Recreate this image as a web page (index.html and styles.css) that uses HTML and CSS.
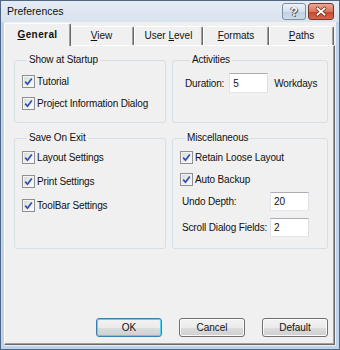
FILE: index.html
```html
<!DOCTYPE html>
<html lang="en">
<head>
  <meta charset="UTF-8" />
  <title>Preferences</title>
  <link rel="stylesheet" href="styles.css">
</head>
<body>
  <div class="window">
    <div class="titlebar">
      <span class="title">Preferences</span>
      <div class="caption-buttons">
        <span class="cap-btn help">?</span>
        <span class="cap-btn close">
          <svg width="26" height="17" viewBox="0 0 26 17">
            <path d="M9 5 L17 12 M17 5 L9 12" stroke="#6b2114" stroke-width="3.6" stroke-linecap="round" fill="none"/>
            <path d="M9 5 L17 12 M17 5 L9 12" stroke="#ffffff" stroke-width="2" stroke-linecap="round" fill="none"/>
          </svg>
        </span>
      </div>
    </div>

    <div class="client">
      <div class="tabs">
        <div class="tab active tab-general"><u>G</u>eneral</div>
        <div class="tab tab-view"><u>V</u>iew</div>
        <div class="tab tab-level">User <u>L</u>evel</div>
        <div class="tab tab-formats"><u>F</u>ormats</div>
        <div class="tab tab-paths"><u>P</u>aths</div>
      </div>

      <div class="panel">
        <div class="groups">
          <fieldset class="group startup">
            <legend>Show at Startup</legend>
            <div class="check-row"><span class="check"><svg viewBox="0 0 11 11"><path d="M2.2 5.6 L4.5 8.2 L8.8 2.4"/></svg></span>Tutorial</div>
            <div class="check-row"><span class="check"><svg viewBox="0 0 11 11"><path d="M2.2 5.6 L4.5 8.2 L8.8 2.4"/></svg></span>Project Information Dialog</div>
          </fieldset>

          <fieldset class="group activities">
            <legend>Activities</legend>
            <div class="field-row">
              <span class="label">Duration:</span>
              <input class="edit" type="text" value="5" />
              <span class="unit">Workdays</span>
            </div>
          </fieldset>

          <fieldset class="group on-exit">
            <legend>Save On Exit</legend>
            <div class="check-row"><span class="check"><svg viewBox="0 0 11 11"><path d="M2.2 5.6 L4.5 8.2 L8.8 2.4"/></svg></span>Layout Settings</div>
            <div class="check-row"><span class="check"><svg viewBox="0 0 11 11"><path d="M2.2 5.6 L4.5 8.2 L8.8 2.4"/></svg></span>Print Settings</div>
            <div class="check-row"><span class="check"><svg viewBox="0 0 11 11"><path d="M2.2 5.6 L4.5 8.2 L8.8 2.4"/></svg></span>ToolBar Settings</div>
          </fieldset>

          <fieldset class="group misc">
            <legend>Miscellaneous</legend>
            <div class="check-row"><span class="check"><svg viewBox="0 0 11 11"><path d="M2.2 5.6 L4.5 8.2 L8.8 2.4"/></svg></span>Retain Loose Layout</div>
            <div class="check-row"><span class="check"><svg viewBox="0 0 11 11"><path d="M2.2 5.6 L4.5 8.2 L8.8 2.4"/></svg></span>Auto Backup</div>
            <div class="field-row undo">
              <span class="label">Undo Depth:</span>
              <input class="edit" type="text" value="20" />
            </div>
            <div class="field-row scroll">
              <span class="label">Scroll Dialog Fields:</span>
              <input class="edit" type="text" value="2" />
            </div>
          </fieldset>
        </div>

        <div class="buttons">
          <button class="btn default-btn">OK</button>
          <button class="btn">Cancel</button>
          <button class="btn">Default</button>
        </div>
      </div>
    </div>
  </div>
</body>
</html>
```

FILE: styles.css
```css
* {
  box-sizing: border-box;
}

body {
  margin: 0;
  font-family: "Liberation Sans", Arial, sans-serif;
  font-size: 10px;
  letter-spacing: -0.15px;
  color: #111;
  background: #fff;
}

.window {
  width: 340px;
  height: 350px;
  border: 1px solid #4f6784;
  background: #bcd4ec;
  padding: 0 3px 3px 3px;
  display: flex;
  flex-direction: column;
}

/* title bar */
.titlebar {
  height: 21px;
  margin: 0 -3px;
  padding: 0 5px 0 6px;
  display: flex;
  align-items: flex-start;
  justify-content: space-between;
  background: linear-gradient(#e4ebf3, #d9e3ee);
}

.title {
  font-size: 10.5px;
  letter-spacing: 0;
  line-height: 21px;
}

.caption-buttons {
  display: flex;
  gap: 2px;
  margin-top: 2px;
}

.cap-btn {
  height: 17px;
  border-radius: 3px;
  display: flex;
  align-items: center;
  justify-content: center;
}

.help {
  width: 24px;
  border: 1px solid #7d8ea3;
  background: linear-gradient(#eef3f9 0%, #d5e0ec 50%, #c1d0e1 51%, #cddbeb 100%);
  color: #fff;
  font-weight: bold;
  font-size: 12px;
  text-shadow: 0 0 1px #3a4a60, 1px 1px 0 #55657a, -1px 0 0 #55657a;
}

.close {
  width: 26px;
  border: 1px solid #7a3425;
  background: linear-gradient(#eaa894 0%, #d9755c 50%, #c4452a 51%, #d5694c 100%);
}

.close svg {
  display: block;
}

/* client area */
.client {
  flex: 1;
  background: #f0f0f0;
  display: flex;
  flex-direction: column;
}

.tabs {
  height: 23px;
  padding-left: 2px;
  display: flex;
  align-items: flex-end;
}

.tab {
  height: 19px;
  line-height: 18px;
  text-align: center;
  background: #f0f0f0;
  border-top: 1px solid #fff;
  border-left: 1px solid #fff;
  border-right: 1px solid #696969;
  box-shadow: inset -1px 0 #a0a0a0;
  border-radius: 2px 2px 0 0;
  letter-spacing: 0;
}

.tab-general { width: 63px; }
.tab-view { width: 65px; }
.tab-level { width: 69px; }
.tab-formats { width: 66px; }
.tab-paths { width: 65px; }

.tab.active {
  width: 67px;
  height: 23px;
  margin: 0 -2px -1px -2px;
  padding-top: 1px;
  line-height: 20px;
  font-weight: bold;
  letter-spacing: 0.4px;
  position: relative;
  z-index: 1;
}

.panel {
  flex: 1;
  margin: 0 1px 1px 0;
  border-top: 1px solid #fff;
  border-left: 1px solid #fff;
  border-right: 1px solid #696969;
  border-bottom: 1px solid #696969;
  box-shadow: inset -1px -1px #a0a0a0;
  padding: 8px 6px 7px 9px;
  display: flex;
  flex-direction: column;
}

.groups {
  display: grid;
  grid-template-columns: 152px 156px;
  grid-template-rows: 69px 117px;
  column-gap: 6px;
  row-gap: 9px;
}

.group {
  margin: 0;
  padding: 0;
  min-width: 0;
  border: 1px solid #d5dfe5;
  border-radius: 3px;
}

.group legend {
  margin-left: 5px;
  padding: 0 2px;
  line-height: 12px;
}

.startup {
  padding: 9px 0 0 7px;
}

.startup .check-row + .check-row {
  margin-top: 9px;
}

.activities {
  padding: 7px 0 0 12px;
}

.on-exit {
  padding: 7px 0 0 7px;
}

.on-exit .check-row + .check-row {
  margin-top: 11px;
}

.misc {
  padding: 7px 0 0 7px;
}

.misc .check-row + .check-row {
  margin-top: 9px;
}

.misc .undo {
  margin-top: 6px;
  padding-left: 2px;
}

.misc .scroll {
  margin-top: 7px;
  padding-left: 2px;
}

.check-row {
  display: flex;
  align-items: center;
  height: 13px;
  line-height: 13px;
}

.check {
  width: 13px;
  height: 13px;
  margin-right: 2px;
  border: 1px solid #8e8f8f;
  background: linear-gradient(135deg, #d6d6d6, #f4f4f4 70%, #ffffff);
  box-shadow: inset 0 0 0 1px #f4f4f4;
}

.check svg {
  display: block;
  width: 11px;
  height: 11px;
  fill: none;
  stroke: #2b4fb0;
  stroke-width: 1.7;
}

.field-row {
  display: flex;
  align-items: center;
}

.activities .label {
  margin-right: 5px;
}

.activities .unit {
  margin-left: 6px;
}

.activities .edit {
  height: 20px;
}

.misc .label {
  width: 88px;
}

.edit {
  width: 39px;
  height: 19px;
  padding: 0 3px;
  border: 1px solid;
  border-color: #abadb3 #dbdfe6 #e3e9ef #e2e3ea;
  background: #fff;
  font-family: inherit;
  font-size: 10px;
  letter-spacing: -0.15px;
  color: #111;
  outline: none;
}

.buttons {
  margin-top: auto;
  display: flex;
  justify-content: flex-end;
  gap: 17px;
}

.btn {
  width: 66px;
  height: 19px;
  padding: 0;
  font-family: inherit;
  font-size: 10px;
  color: #111;
  border: 1px solid #707070;
  border-radius: 3px;
  background: linear-gradient(#f2f2f2 0%, #ebebeb 50%, #dddddd 51%, #cfcfcf 100%);
  box-shadow: inset 0 0 0 1px #fcfcfc;
}

.default-btn {
  border-color: #3c7fb1;
  box-shadow: inset 0 0 0 1px #48d8fb;
}
```
